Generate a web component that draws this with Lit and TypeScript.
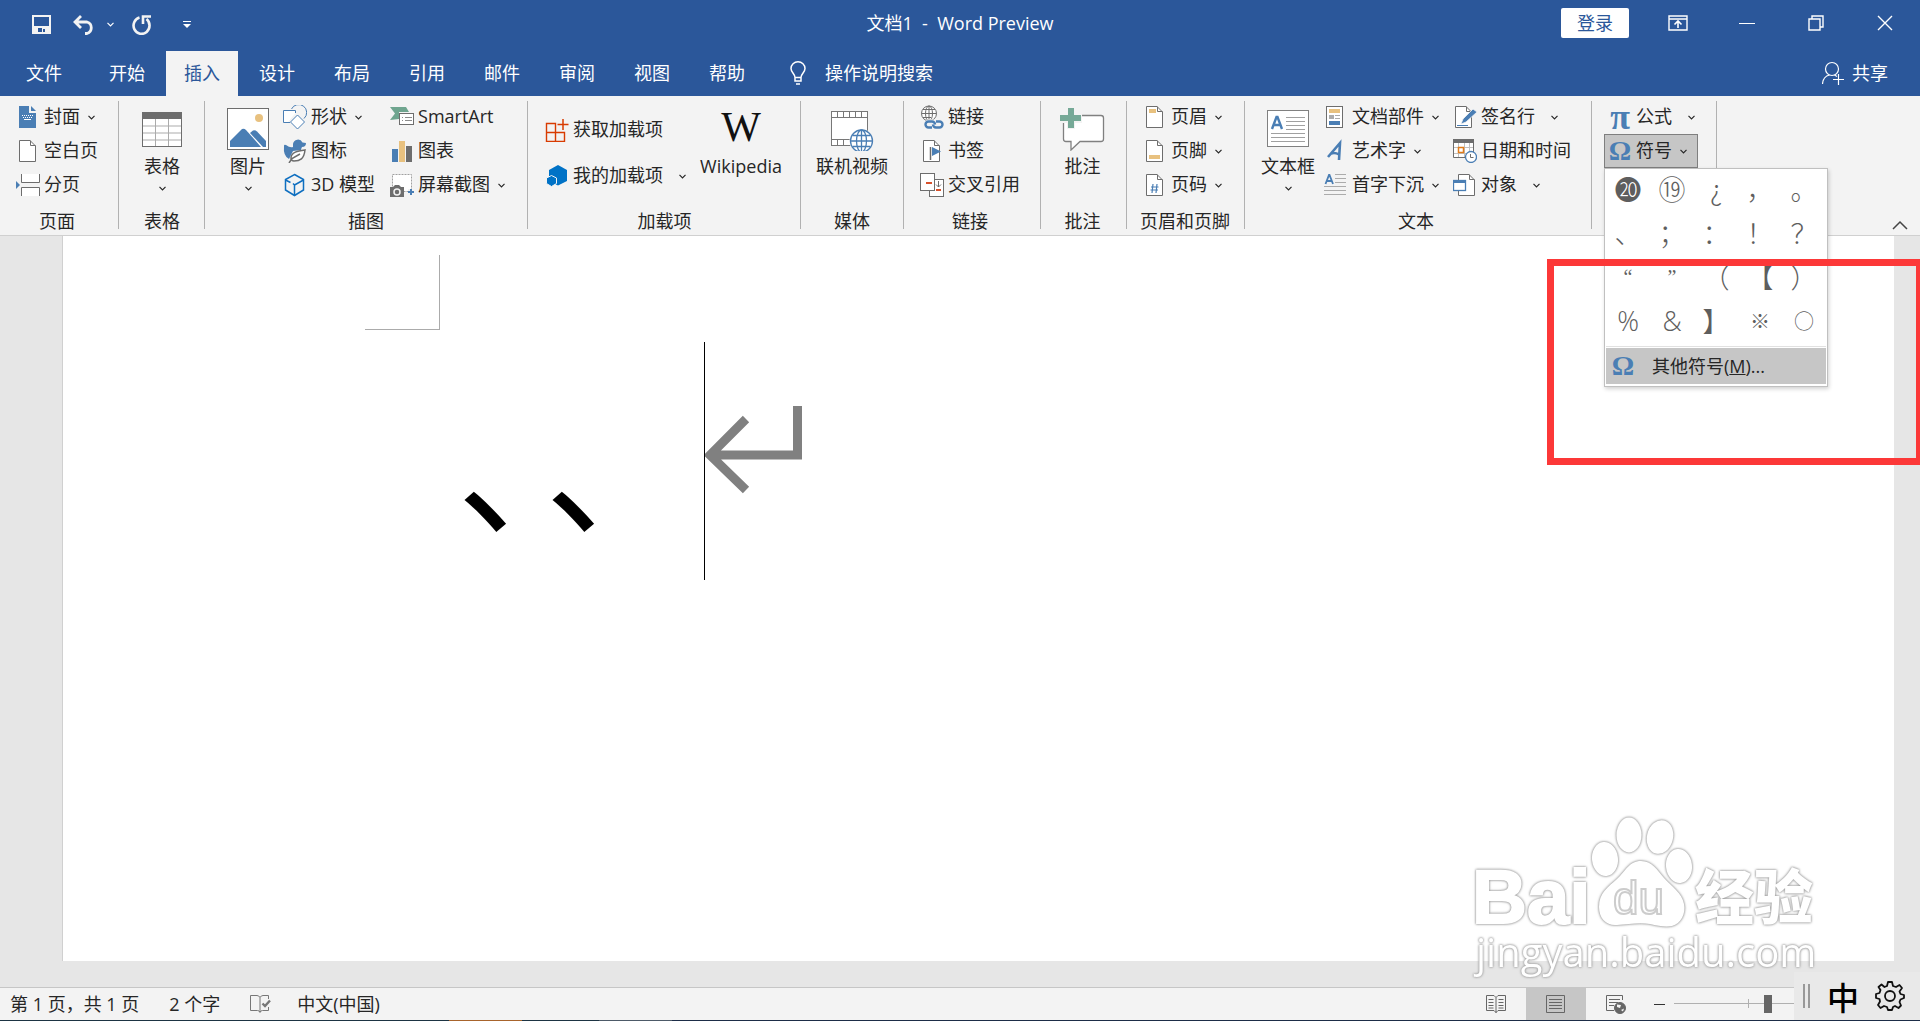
import { LitElement, html, svg, css, nothing } from "lit";
import { customElement, state } from "lit/decorators.js";

const BLUE = "#4a7eb4";
const GREY = "#6d6d6d";
const SAND = "#e8c17f";
const GREEN = "#6fa58f";

const svgIcon = (w: number, h: number, body: unknown) =>
  html`<svg class="icon" width=${w} height=${h} viewBox="0 0 ${w} ${h}" fill="none" aria-hidden="true">${body}</svg>`;

const page = (extra: unknown) => svg`
  <path d="M3.5 1.5H14L19.500 7V22.500H3.500Z" fill="#fff" stroke=${GREY}/>
  <path d="M14.500 1.500V6.500H19.500" stroke=${GREY}/>${extra}`;

const ICONS: Record<string, unknown> = {
  cover: svgIcon(24, 24, svg`<path d="M3 1H13V8H20V23H3Z" fill=${BLUE}/><path d="M15 1L20 6H15Z" fill=${BLUE}/>
    <path d="M6 10.500H17M7 12.500H17" stroke="#fff" stroke-dasharray="1 1"/><path d="M8 14.500H15" stroke="#fff"/>`),
  blank: svgIcon(24, 24, page(nothing)),
  break: svgIcon(24, 24, svg`<path d="M5 1H24V9H5ZM5 15H24V23H5Z" fill="#fff"/>
    <path d="M5.500 1V9.500H23.500V1M5.500 23V14.500H23.500V23" stroke=${GREY}/><path d="M0 8L4 12L0 16Z" fill=${BLUE}/>`),
  table: svgIcon(42, 42, svg`<rect x="1.500" y="4.500" width="39" height="34" fill="#fff"/>
    <path d="M1 18H41M1 25H41M1 32H41M14.500 11V38M27.500 11V38" stroke="#ababab"/>
    <rect x="1.500" y="4.500" width="39" height="34" stroke=${GREY}/><path d="M1 4H41V11H1Z" fill=${GREY}/>`),
  picture: svgIcon(42, 42, svg`<rect x="0.500" y="0.500" width="41" height="41" fill="#fff" stroke=${GREY}/>
    <circle cx="32" cy="10" r="4" fill=${SAND}/><path d="M3 39V33L15 21Q17 20 19 22L34 39Z" fill=${BLUE}/>
    <path d="M23 25L26 22.500Q28 21.500 30 23.500L39 33V39H36Z" fill=${BLUE}/>`),
  shapes: svgIcon(24, 24, svg`<path d="M8.500 4A8 8 0 1 1 21 13.500" stroke=${BLUE}/><path d="M0.500 5.500H12.500V8L5 17H0.500Z" fill="#fff"/>
    <path d="M12.500 8V5.500H0.500V17.500H7" stroke=${BLUE}/><path d="M14.500 10L21.500 17L14.500 24L7.500 17Z" fill="#fff" stroke=${BLUE}/>`),
  icons: svgIcon(24, 24, svg`<path d="M1 7Q1 5 3 6Q7 9 10 8V5A5 5 0 0 1 19.500 3.500L23 4Q23 8 19 8Q18 10 18 11L10 12L6 20Q0 17 1 7Z" fill=${BLUE}/>
    <path d="M22 11C15 12 8 13 8 19C8 21 9 22 11 22C17 22 21 20 22 11Z" fill="#fff" stroke=${GREY} stroke-width="1.500"/>
    <path d="M6 24L9 19.500L17 15" stroke=${GREY} stroke-width="1.500"/>`),
  cube: svgIcon(24, 24, svg`<path d="M11.500 1.500L20.500 6.500V17L11.500 22.500L2.500 17V6.500Z" stroke="#0f6fc0" stroke-width="1.500"/>
    <path d="M2.500 7L7.500 9.500M20.500 7L11.500 12V22M10 10.500L11.500 12" stroke="#0f6fc0" stroke-width="1.500"/>`),
  smartart: svgIcon(24, 24, svg`<path d="M0 2H16L19 7H9V14L0 15L5 8.500Z" fill=${GREEN}/>
    <rect x="9.500" y="8.500" width="14" height="11" fill="#fff" stroke=${GREY}/>
    <path d="M12 12.500H13M15 12.500H22M12 15.500H13M15 15.500H22" stroke="#8a8a8a"/>`),
  chart: svgIcon(24, 24, svg`<path d="M2 10H8V23H2Z" fill=${BLUE}/><path d="M9 2H15V23H9Z" fill=${SAND}/><path d="M16 7H22V23H16Z" fill=${GREY}/>`),
  screenshot: svgIcon(24, 24, svg`<rect x="2.500" y="1.500" width="19" height="17" fill="#fff" stroke="#a0a0a0" stroke-dasharray="2 1"/>
    <path d="M0 14H3L5 12H9L11 14H14V24H0Z" fill=${GREY}/><circle cx="7" cy="19" r="3" stroke="#f3f3f3" stroke-width="1.500"/>
    <path d="M18 16H24V22H18Z" fill="#f3f3f3"/><path d="M21 16V22M18 19H24" stroke=${BLUE} stroke-width="2"/>`),
  getaddins: svgIcon(24, 24, svg`<path d="M1.500 5.500H10.500V23.500H1.500ZM1.500 14.500H19.500V23.500H1.500M10.500 14.500V23M19.500 14V23" stroke="#d83b01" stroke-width="1.400"/>
    <path d="M18 1V12M12.500 6.500H23.500" stroke="#d83b01" stroke-width="1.500"/>`),
  myaddins: svgIcon(24, 24, svg`<path d="M13 1L22 6V17L13 21.500L4 17V6Z" fill="#0072c6"/>
    <path d="M6.500 11.500L11.500 14V19.500L6.500 22.500L1.500 19.500V14Z" fill="#0072c6" stroke="#f3f3f3"/>`),
  wiki: html`<span class="icon wiki" aria-hidden="true">W</span>`,
  video: svgIcon(44, 42, svg`<rect x="1.500" y="3.500" width="36" height="34" fill="#fff" stroke="#777"/>
    <path d="M1 9.500H38M1 31.500H38M7.500 4V9M13.500 4V9M19.500 4V9M25.500 4V9M31.500 4V9M7.500 32V38M13.500 32V38" stroke="#777"/>
    <circle cx="31.500" cy="33" r="12" fill="#f3f3f3"/>
    <g stroke=${BLUE} stroke-width="1.300"><circle cx="31.500" cy="33" r="11" fill="#fff"/><ellipse cx="31.500" cy="33" rx="5" ry="11"/>
    <path d="M20.500 33H42.500M31.500 22V44M23 27.500H40M23 38.500H40"/></g>`),
  link: svgIcon(24, 24, svg`<g stroke=${GREY}><circle cx="9" cy="8.500" r="7.500" fill="#fff"/><ellipse cx="9" cy="8.500" rx="3.500" ry="7.500"/><path d="M1.500 8.500H16.500M9 1V16M3 4.500H15M3 12.500H11"/></g>
    <path d="M9 19.500H19" stroke="#f3f3f3" stroke-width="10" stroke-linecap="round"/>
    <path d="M12 22.500H8.500A3 3 0 0 1 8.500 16.500H12A3 3 0 0 1 15 19.500M16 16.500H19.500A3 3 0 0 1 19.500 22.500H16A3 3 0 0 1 13 19.500" stroke=${BLUE} stroke-width="2.400"/>`),
  bookmark: svgIcon(24, 24, svg`${page(nothing)}<path d="M10.500 8V21" stroke=${GREY} stroke-width="1.500"/><path d="M12 8L21 12.500L12 17Z" fill=${BLUE}/>`),
  crossref: svgIcon(24, 24, svg`<rect x="9.500" y="6.500" width="14" height="17" fill="#fff" stroke=${GREY}/>
    <rect x="0.500" y="0.500" width="14" height="17" fill="#fff" stroke=${GREY}/><path d="M6 10H12M16 17H21" stroke="#d8512b" stroke-width="2"/>
    <path d="M18.500 8V14M16 11.500L18.500 14L21 11.500" stroke=${GREY}/>`),
  comment: svgIcon(45, 44, svg`<path d="M6 8.500H41Q43.500 8.500 43.500 11V32Q43.500 34.500 41 34.500H20L11 43V34.500H6Q3.500 34.500 3.500 32V11Q3.500 8.500 6 8.500Z" fill="#fff" stroke="#808080" stroke-width="1.300"/>
    <path d="M7 0H15V7H22V16H15V22H7V16H0V7H7Z" fill="#f3f3f3"/><path d="M8 1H14V8H21V14H14V21H8V14H0V8H8Z" fill="#76a997"/>`),
  header: svgIcon(24, 24, page(svg`<path d="M6 4H13V8H6Z" fill=${SAND}/>`)),
  footer: svgIcon(24, 24, page(svg`<path d="M6 16H17V20H6Z" fill=${SAND}/>`)),
  pageno: svgIcon(24, 24, page(svg`<path d="M10 11L9 20M14 11L13 20M8 14H15.500M7.500 17H15" stroke=${BLUE} stroke-width="1.200"/>`)),
  textbox: svgIcon(42, 42, svg`<rect x="0.500" y="2.500" width="41" height="36" fill="#fff" stroke="#808080"/>
    <path d="M5 21L9.500 9H10.500L15 21M6.500 17H13.500" stroke=${BLUE} stroke-width="2.400"/>
    <path d="M19 9.500H38M19 13.500H38M19 17.500H38M19 21.500H38M4 25.500H38M4 29.500H38M4 33.500H38" stroke="#a0a0a0"/>`),
  parts: svgIcon(24, 24, svg`<rect x="2.500" y="1.500" width="16" height="21" fill="#fff" stroke=${GREY}/><path d="M5 4H16V8H5Z" fill=${SAND}/>
    <path d="M5 10H10V14H5Z" fill="#ababab"/><path d="M11 10.500H16M11 13.500H16" stroke="#ababab"/><path d="M5 16H16V20H5Z" fill=${BLUE}/>`),
  wordart: svgIcon(24, 24, svg`<path d="M4 18L16 4L15 21M7 14.500Q11 13 15 15.500" stroke=${BLUE} stroke-width="2.600"/>`),
  dropcap: svgIcon(24, 24, svg`<path d="M1.500 11L5 2H5.500L9 11M3 8H8" stroke=${BLUE} stroke-width="1.800"/>
    <path d="M11 1.500H22M11 5.500H22M11 9.500H22M0 13.500H22M0 17.500H22M0 21.500H22" stroke="#ababab"/>`),
  signature: svgIcon(24, 24, svg`<path d="M2.500 1.500H13L18.500 7V22.500H2.500Z" fill="#fff" stroke=${GREY}/><path d="M13.500 1.500V6.500H18" stroke=${GREY}/>
    <path d="M8 19L10 14L20 4L24 7L13 17Z" fill=${BLUE} stroke="#f3f3f3" stroke-width="0.800"/><path d="M4 20.500H15" stroke=${BLUE}/>`),
  date: svgIcon(24, 24, svg`<path d="M0.500 0.500H20.500V18.500H0.500Z" fill="#fff" stroke=${GREY}/><path d="M0 0H21V4H0Z" fill=${GREY}/>
    <path d="M1 8.500H20M1 14.500H20M5.500 4V18M11.500 4V18M16.500 4V18" stroke="#c0c0c0"/><rect x="5.500" y="8.500" width="5" height="5" fill="#fff" stroke="#e07b1a" stroke-width="1.500"/>
    <circle cx="18" cy="18" r="5.500" fill="#fff" stroke=${BLUE} stroke-width="1.300"/><path d="M17.500 15V18.500H20.500" stroke=${GREY}/>`),
  object: svgIcon(24, 24, svg`<path d="M5.500 1.500H16L21.500 7V22.500H5.500Z" fill="#fff" stroke=${GREY}/><path d="M16.500 1.500V6.500H21.500" stroke=${GREY}/>
    <rect x="0.500" y="7.500" width="12" height="10" fill="#fff" stroke=${BLUE} stroke-width="1.300"/><path d="M0 7H13V10H0Z" fill=${BLUE}/>`),
  pi: html`<span class="greek pi" aria-hidden="true">π</span>`,
  omega: html`<span class="greek" aria-hidden="true">Ω</span>`,
};

const chevron = (cls = "") => html`<svg class="chev ${cls}" width="7" height="5" viewBox="0 0 7 5" fill="none" aria-hidden="true"
  ><path d="M0.500 0.800L3.500 3.800L6.500 0.800" stroke="currentColor" stroke-width="1.200"/></svg>`;

type Item = [icon: string, label: string, arrow?: "near" | "far"];
const row = ([icon, label, arrow]: Item) => html`<button class="row">${ICONS[icon]}<span class="label">${label}</span>${arrow ? chevron(arrow) : nothing}</button>`;
const big = (icon: string, label: string, arrow = false) =>
  html`<button class="big">${ICONS[icon]}<span>${label}</span>${arrow ? chevron() : nothing}</button>`;
const column = (items: Item[], cls = "") => html`<div class="col ${cls}">${items.map(row)}</div>`;
const group = (name: string, label: string, body: unknown) =>
  html`<section class="group ${name}" aria-label=${label}><div class="tools">${body}</div><div class="caption">${label}</div></section><span class="sep"></span>`;

const SYMBOLS = ["⓴", "⑲", "¿", "，", "。", "、", "；", "：", "！", "？", "“", "”", "（", "【", "）", "%", "&", "】", "※", "○"];
const symbolClass = (s: string) => ("“”".includes(s) ? "quote" : "%&".includes(s) ? "latin" : "※○".includes(s) ? "small" : "");
const TABS = ["文件", "开始", "插入", "设计", "布局", "引用", "邮件", "审阅", "视图", "帮助"];

@customElement("app-root")
export class AppRoot extends LitElement {
  @state() private tab = "插入";

  static styles = css`
    :host { display: flex; flex-direction: column; min-height: 100vh; position: relative; overflow: hidden; background: #e6e6e6;
      font: 18px/24px "Open Sans", "Noto Sans CJK SC", sans-serif; color: #262626; }
    * { box-sizing: border-box; }
    button, input { font: inherit; color: inherit; background: none; border: 0; padding: 0; margin: 0; }
    button { white-space: nowrap; }
    svg { display: block; flex: none; }

    .titlebar { display: grid; grid-template-columns: 1fr auto 1fr; align-items: center; height: 51px; padding-bottom: 6px; background: #2b579a; color: #fff; }
    .quick { display: flex; align-items: center; padding-left: 32px; padding-top: 4px; }
    .quick .undo { margin-left: 22px; }
    .quick .more { margin-left: 11px; }
    .quick .redo { margin-left: 18px; }
    .quick .custom { margin-left: 31px; }
    .title { white-space: pre; }
    .window { display: flex; justify-content: flex-end; align-items: center; padding-right: 1px; }
    .window button { width: 69px; display: flex; justify-content: center; }
    .window .signin { display: block; width: 68px; height: 30px; margin-right: 14px; border-radius: 2px; background: #fff; color: #2b579a; line-height: 30px; }

    .tabs { display: flex; height: 45px; padding-left: 8px; padding-right: 32px; gap: 3px; background: #2b579a; color: #fff; }
    .tabs button { padding: 0 18px 2px; }
    .tabs .on { background: #f3f3f3; color: #2b579a; }
    .tabs .file { margin-right: 8px; }
    .tabs .tell { display: flex; align-items: center; gap: 19px; padding: 0 24px 2px; }
    .tabs .share { display: flex; align-items: center; gap: 8px; margin-left: auto; padding: 0 0 2px; }

    .ribbon { display: flex; position: relative; z-index: 2; height: 140px; background: #f3f3f3; border-bottom: 1px solid #d0d0d0; }
    .sep { width: 1px; margin: 5px 0 6px; background: #b1b1b1; }
    .group { display: flex; flex-direction: column; padding-top: 4px; }
    .tools { display: flex; height: 102px; }
    .caption { padding-top: 7px; text-align: center; }
    .col { display: flex; flex-direction: column; align-items: flex-start; }
    .row { display: flex; align-items: center; height: 34px; gap: 4px; }
    .label { padding-bottom: 2px; }
    .near { margin-left: 4px; }
    .far { margin-left: 12px; }
    .big { display: flex; flex-direction: column; align-items: center; padding-top: 7px; min-width: 42px; }
    .big .icon { height: 44px; margin-bottom: 3px; }
    .big .chev { margin-top: 8px; }
    .wiki { font: 42px/40px "Liberation Serif", serif; color: #111; }
    .greek { width: 24px; text-align: center; font: bold 28px/24px "Liberation Serif", serif; color: #4a7eb4; }
    .pi { font-size: 36px; }

    .pages { padding-left: 16px; padding-right: 20px; }
    .tables { padding-left: 22px; padding-right: 21px; }
    .pictures { padding-left: 22px; padding-right: 22px; }
    .pictures .tools { gap: 14px; }
    .pictures .first { margin-right: 1px; }
    .addins { padding-left: 17px; padding-right: 16px; }
    .addins .tools { gap: 12px; }
    .addins .col { padding-top: 7px; }
    .addins .row { height: 46px; }
    .addins .big { min-width: 86px; }
    .media { padding-left: 15px; padding-right: 15px; }
    .links { padding-left: 16px; padding-right: 20px; }
    .comments { padding-left: 19px; padding-right: 21px; }
    .headers { padding-left: 13px; padding-right: 14px; }
    .headers .tools { padding-left: 3px; }
    .text { padding-left: 16px; padding-right: 20px; }
    .text .first { margin-left: 9px; margin-right: 14px; }
    .symbols { padding-left: 12px; padding-right: 18px; }
    .symbols .row { padding-left: 4px; }
    .anchor { position: relative; }
    .symbols .open { padding: 0 10px 0 3px; background: #c6c6c6; border: 1px solid #7f7f7f; }
    .collapse { margin-left: auto; align-self: flex-end; padding: 0 12px 5px; }

    .panel { position: absolute; top: 34px; left: 0; width: 224px; padding: 1px; background: #fff; border: 1px solid #c0c0c0; box-shadow: 1px 2px 4px rgba(0, 0, 0, 0.18); }
    .grid { display: grid; grid-template-columns: repeat(5, 44px); grid-auto-rows: 44px; border-bottom: 1px solid #e1e1e1; }
    .grid button { font: 300 27px/38px "Noto Sans CJK SC", sans-serif; color: #5e5e5e; padding-bottom: 6px; text-align: center; }
    .grid .latin { font-family: "Open Sans", sans-serif; }
    .grid .quote { font-family: "Liberation Serif", serif; font-size: 20px; }
    .grid .small { font-size: 20px; }
    .panel .other { display: flex; align-items: center; gap: 17px; width: 100%; height: 36px; margin: 1px 0; padding-left: 5px; background: #c6c6c6; }

    .canvas { flex: 1; display: flex; padding: 0 26px 26px 63px; }
    .sheet { flex: 1; min-height: 725px; display: flex; align-items: flex-start; background: #fff; box-shadow: -1px 0 0 #d0d0d0; }
    .corner { width: 75px; height: 75px; margin: 19px 0 0 302px; border-right: 1px solid #ababab; border-bottom: 1px solid #ababab; }
    .line { display: flex; padding-top: 106px; color: #000; }
    .words-line { display: flex; width: 264px; padding-left: 17px; }
    .words-line span { flex: none; width: 88px; font: 144px/238px "Noto Sans CJK SC", sans-serif; }
    .mark { border-left: 1px solid #000; height: 238px; padding-top: 64px; }

    .status { display: flex; align-items: center; height: 33px; padding-left: 10px; background: #f3f3f3; border-top: 1px solid #c6c6c6; }
    .status .words { margin-left: 30px; }
    .status .proof { margin: 0 26px 0 30px; }
    .views { display: flex; margin-left: auto; height: 32px; }
    .views button { width: 60px; display: flex; align-items: center; justify-content: center; }
    .views .on { background: #c6c6c6; }
    .zoom { display: flex; align-items: center; gap: 9px; margin-left: 8px; margin-right: 6px; }
    .zoom input { appearance: none; width: 240px; height: 20px; background: linear-gradient(#b0b0b0, #b0b0b0) 0 9px / 100% 1px no-repeat, linear-gradient(#b0b0b0, #b0b0b0) 74px 5px / 1px 9px no-repeat; }
    .zoom input::-webkit-slider-thumb { appearance: none; width: 8px; height: 18px; background: #666; }
    .taskbar { height: 1px; background: linear-gradient(90deg, #1d3443 449px, #a8642c 449px 522px, #1d3443 522px 599px, #4d5a68 599px 672px, #1d2d48 672px); }

    .ime { position: absolute; z-index: 3; right: 0; bottom: 1px; display: flex; align-items: center; width: 126px; height: 48px; padding: 0 15px 0 9px; background: #e9e9e9; color: #000; }
    .ime .lang { margin-left: 16px; font: 500 32px/40px "Noto Sans CJK SC", sans-serif; }
    .ime .gear { margin-left: auto; }
    .highlight { position: absolute; z-index: 4; top: 259px; right: -3px; width: 376px; height: 206px; border: 7px solid #fc3838; pointer-events: none; }
    .watermark { position: absolute; z-index: 1; right: 60px; bottom: 31px; fill: #fff; filter: drop-shadow(0 0 1px #999) drop-shadow(0 0 1px #bbb); pointer-events: none; }
    .wm-brand { font: bold 76px "Liberation Sans", sans-serif; stroke: #fff; stroke-width: 2px; }
    .wm-du { font: 46px "Liberation Sans", sans-serif; stroke: #ccc; stroke-width: 2px; }
    .wm-cjk { font: 900 59px "Noto Sans CJK SC", sans-serif; }
    .wm-url { font: 40px "Open Sans", sans-serif; }
  `;

  private titleBar() {
    return html`<header class="titlebar">
      <div class="quick">
        <button aria-label="保存"><svg width="19" height="19" viewBox="0 0 19 19" fill="none"><path d="M1 1H18V18H1Z" stroke="#f3f3f3" stroke-width="2"/><path d="M2 11H17V18H13V14H11V18H10V13H6V18H2Z" fill="#f3f3f3"/></svg></button>
        <button class="undo" aria-label="撤消"><svg width="23" height="20" viewBox="0 0 23 20" fill="none"><path d="M8 1L2 7L8 13M3 7H14A6 6 0 0 1 14 18.500H12" stroke="#f3f3f3" stroke-width="2.800"/></svg></button>
        <button class="more" aria-label="撤消选项">${chevron()}</button>
        <button class="redo" aria-label="重复"><svg width="20" height="20" viewBox="0 0 20 20" fill="none"><path d="M7.500 2.500A8 8.300 0 1 0 14.500 4" stroke="#f3f3f3" stroke-width="2.600"/><path d="M11 9V1.500H19" stroke="#f3f3f3" stroke-width="2.600"/></svg></button>
        <button class="custom" aria-label="自定义"><svg width="8" height="8" viewBox="0 0 8 8"><path d="M0 0H8V1H0ZM0 3H8L4 7Z" fill="#fff"/></svg></button>
      </div>
      <div class="title">文档1  -  Word Preview</div>
      <div class="window">
        <button class="signin">登录</button>
        <button aria-label="功能区显示选项"><svg width="20" height="16" viewBox="0 0 20 16" fill="none" stroke="#fff"><path d="M1 1H19V15H1ZM1 4H19" stroke-width="1.400"/><path d="M10 13V6.500M6.500 9.500L10 6L13.500 9.500" stroke-width="1.600"/></svg></button>
        <button aria-label="最小化"><svg width="16" height="16" viewBox="0 0 16 16"><path d="M0 8H16V9H0Z" fill="#fff"/></svg></button>
        <button aria-label="还原"><svg width="16" height="16" viewBox="0 0 16 16" fill="none" stroke="#fff" stroke-width="1.400"><path d="M1 4H12V15H1ZM4 4V1H15V12H12"/></svg></button>
        <button aria-label="关闭"><svg width="16" height="16" viewBox="0 0 16 16" fill="none" stroke="#fff" stroke-width="1.400"><path d="M1 1L15 15M15 1L1 15"/></svg></button>
      </div>
    </header>`;
  }

  private tabBar() {
    return html`<nav class="tabs">
      ${TABS.map((t, i) => html`<button class="${t === this.tab ? "on" : ""} ${i === 0 ? "file" : ""}" @click=${() => (this.tab = t)}>${t}</button>`)}
      <button class="tell"><svg width="16" height="24" viewBox="0 0 16 24" fill="none" stroke="#fff" stroke-width="1.500"><path d="M5 16.500C5 13 1 11.500 1 7.500A7 6.700 0 0 1 15 7.500C15 11.500 11 13 11 16.500ZM5 17V20H11V17M6 23H10"/></svg><span>操作说明搜索</span></button>
      <button class="share"><svg width="22" height="24" viewBox="0 0 22 24" fill="none" stroke="#fff" stroke-width="1.200"><circle cx="10" cy="8" r="6.500"/><path d="M0.500 23Q1 15.500 7.500 14M12.500 14L15 15.500M16.500 13V24M11 18.500H22"/></svg><span>共享</span></button>
    </nav>`;
  }

  private ribbon() {
    return html`<div class="ribbon">
      ${group("pages", "页面", column([["cover", "封面", "near"], ["blank", "空白页"], ["break", "分页"]]))}
      ${group("tables", "表格", big("table", "表格", true))}
      ${group("pictures", "插图", html`${big("picture", "图片", true)}
        ${column([["shapes", "形状", "near"], ["icons", "图标"], ["cube", "3D 模型"]], "first")}
        ${column([["smartart", "SmartArt"], ["chart", "图表"], ["screenshot", "屏幕截图", "near"]])}`)}
      ${group("addins", "加载项", html`${column([["getaddins", "获取加载项"], ["myaddins", "我的加载项", "far"]])}${big("wiki", "Wikipedia")}`)}
      ${group("media", "媒体", big("video", "联机视频"))}
      ${group("links", "链接", column([["link", "链接"], ["bookmark", "书签"], ["crossref", "交叉引用"]]))}
      ${group("comments", "批注", big("comment", "批注"))}
      ${group("headers", "页眉和页脚", column([["header", "页眉", "near"], ["footer", "页脚", "near"], ["pageno", "页码", "near"]]))}
      ${group("text", "文本", html`${big("textbox", "文本框", true)}
        ${column([["parts", "文档部件", "near"], ["wordart", "艺术字", "near"], ["dropcap", "首字下沉", "near"]], "first")}
        ${column([["signature", "签名行", "far"], ["date", "日期和时间"], ["object", "对象", "far"]])}`)}
      <section class="group symbols" aria-label="符号"><div class="tools"><div class="col">
        ${row(["pi", "公式", "far"])}
        <div class="anchor">
          <button class="row open" aria-expanded="true">${ICONS.omega}<span class="label">符号</span>${chevron("near")}</button>
          ${this.symbolPanel()}
        </div>
      </div></div></section><span class="sep"></span>
      <button class="collapse" aria-label="折叠功能区"><svg width="16" height="10" viewBox="0 0 16 10" fill="none"><path d="M1 9L8 2L15 9" stroke="#444" stroke-width="1.500"/></svg></button>
    </div>`;
  }

  private symbolPanel() {
    return html`<div class="panel">
      <div class="grid">${SYMBOLS.map((s) => html`<button class=${symbolClass(s)}>${s}</button>`)}</div>
      <button class="other">${ICONS.omega}<span>其他符号(<u>M</u>)...</span></button>
    </div>`;
  }

  private statusBar() {
    return html`<footer class="status">
      <span>第 1 页，共 1 页</span><span class="words">2 个字</span>
      <button class="proof" aria-label="校对"><svg width="21" height="18" viewBox="0 0 21 18" fill="none"><path d="M10 2.500Q9 0.500 7 0.500H0.500V15.500H7.500Q9.500 15.500 10 17.500Q10.500 15.500 12.500 15.500H18.500V12M10 2.500V17M10 2.500Q11 0.500 13 0.500H18.500V4" stroke="#777"/><path d="M12.500 8.500L15 11L20 5.500" stroke="#777" stroke-width="2.400"/></svg></button>
      <span>中文(中国)</span>
      <div class="views">
        <button aria-label="阅读视图"><svg width="20" height="19" viewBox="0 0 20 19" fill="none" stroke="#666"><path d="M10 2.500L8 0.500H0.500V15.500H8L10 17.500L12 15.500H19.500V0.500H12L10 2.500V18M2.500 4.500H7.500M2.500 7.500H7.500M2.500 10.500H7.500M2.500 13H7.500M12.500 4.500H17.500M12.500 7.500H17.500M12.500 10.500H17.500M12.500 13H17.500"/></svg></button>
        <button class="on" aria-label="页面视图"><svg width="20" height="18" viewBox="0 0 20 18" fill="none" stroke="#666"><path d="M0.500 0.500H18.500V17.500H0.500ZM3 4.500H16M3 7.500H16M3 10.500H16M3 13.500H16"/></svg></button>
        <button aria-label="Web 版式视图"><svg width="20" height="19" viewBox="0 0 20 19" fill="none" stroke="#666"><path d="M8 15.500H0.500V0.500H16.500V5M3 4.500H14M3 7.500H12M3 10.500H8"/><circle cx="14" cy="13" r="5.500" fill="#666"/><path d="M11 9.500L15 10L14 13L11 12ZM15 15L18 13.500L17 16.500Z" fill="#f3f3f3" stroke="none"/></svg></button>
      </div>
      <div class="zoom"><button aria-label="缩小"><svg width="11" height="11" viewBox="0 0 11 11"><path d="M0 5H11V6H0Z" fill="#333"/></svg></button>
        <input type="range" min="0" max="100" value="39" aria-label="缩放" /></div>
    </footer><div class="taskbar"></div>`;
  }

  render() {
    return html`
      ${this.titleBar()}${this.tabBar()}${this.ribbon()}
      <main class="canvas"><div class="sheet">
        <div class="corner"></div>
        <div class="line"><div class="words-line"><span>、</span><span>、</span></div>
          <div class="mark"><svg width="98" height="88" viewBox="0 0 98 88" fill="none" stroke="#808080"><path d="M92.500 0V49H6M41 13L5 49L41 84" stroke-width="9"/></svg></div>
        </div>
      </div></main>
      ${this.statusBar()}
      <svg class="watermark" width="400" height="190" viewBox="0 0 400 190" aria-hidden="true">
        <text class="wm-brand" x="12" y="123">Bai</text>
        <ellipse cx="169" cy="35" rx="12.500" ry="17.500"/><ellipse cx="200" cy="37" rx="13" ry="17" transform="rotate(14 200 37)"/>
        <ellipse cx="145" cy="59" rx="13" ry="17" transform="rotate(-6 145 59)"/><ellipse cx="219" cy="66" rx="13" ry="17" transform="rotate(-6 219 66)"/>
        <path d="M181 61C169 61 166 71 157 79C148 87 139 93 139 107C139 119 147 126 157 125C168 124 181 122 190 124C198 126 206 127 212 126C221 124 226 113 224 104C222 93 212 87 204 78C197 70 192 61 181 61Z"/>
        <text class="wm-du" x="153" y="114">du</text>
        <text class="wm-cjk" x="235" y="119">经验</text>
        <text class="wm-url" x="16" y="167">jingyan.baidu.com</text>
      </svg>
      <div class="ime"><svg width="8" height="24" viewBox="0 0 8 24"><path d="M0 0H2V24H0ZM5 0H7V24H5Z" fill="#999"/></svg><span class="lang">中</span>
        <button class="gear" aria-label="输入法设置"><svg width="30" height="30" viewBox="0 0 30 30" fill="none" stroke="#111" stroke-width="1.800"><circle cx="15" cy="15" r="5"/><path d="M12 5L13 1H17L18 5L21 6L24.500 4L27 7L24.500 10.500L25.500 13L29 14V17L25.500 18.500L24.500 21L26 24.500L23.500 27L20 25L18 26L17 29H13L12 26L9 25L5.500 27L3 24L5 20.500L4.500 18L1 17V13L4.500 12L5.500 9L3.500 6L6.500 3.500L9.500 6Z" stroke-linejoin="round"/></svg></button></div>
      <div class="highlight"></div>
    `;
  }
}
